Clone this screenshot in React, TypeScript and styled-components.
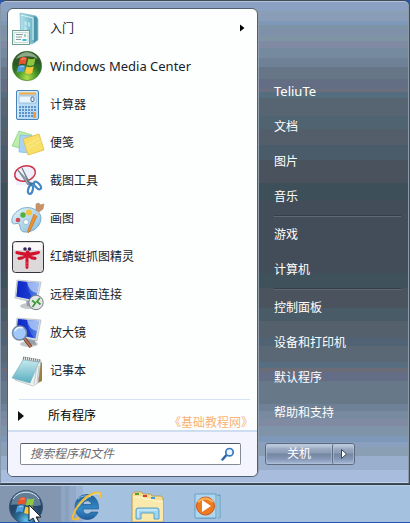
import React from "react";
import styled, { createGlobalStyle } from "styled-components";

const Global = createGlobalStyle`
  * { box-sizing: border-box; }
  body {
    margin: 0;
    font: 12px/18px "Noto Sans", "Noto Sans CJK SC", sans-serif;
  }
  button, input { font: inherit; }
`;

/* Glass tint bands: [end position, colour] from top to bottom */
const bands: [number, string][] = [
  [10, "#8ba1c4"], [13, "#8a9fb3"], [20, "#8a9db8"], [24, "#7d98b8"],
  [28, "#7d94a6"], [35, "#7f91a9"], [40, "#8095a4"], [47, "#808ba3"],
  [57, "#768a9f"], [66, "#6f8196"], [78, "#677687"], [88, "#636e84"],
  [91, "#6b6e7d"], [97, "#556e7f"], [115, "#576573"], [128, "#4f6370"],
  [144, "#535e6a"], [159, "#4a5b69"], [182, "#4a525d"], [199, "#3d5059"],
  [272, "#434d59"], [287, "#3f525b"], [307, "#4b535e"], [320, "#4a5b68"],
  [337, "#54606b"], [345, "#506374"], [361, "#5a6774"], [367, "#566e80"],
  [371, "#6a6d78"], [380, "#636e86"], [403, "#677889"], [410, "#6e8196"],
  [418, "#778a9f"], [425, "#808ba3"], [435, "#7f94a9"], [441, "#7d98b8"],
  [446, "#8a9fc0"], [455, "#8a9fb4"], [469, "#9aaecd"], [484, "#a8bcdd"],
];
const glass = bands
  .map(([end, c], i) => `${c} ${i ? bands[i - 1][0] : 0}px ${end}px`)
  .join(", ");

const Desktop = styled.main`
  display: flex;
  flex-direction: column;
  min-height: 100vh;
  background: #2456b0;
`;

const Menu = styled.section`
  display: grid;
  grid-template-columns: minmax(0, 251fr) minmax(0, 151fr);
  padding: 7px 0 6px 6px;
  border: 1px solid #414e5c;
  border-left-color: #8496aa;
  border-radius: 6px 6px 0 0;
  box-shadow: inset 0 1px #b4c2d8, inset -1px 0 #8a99aa, inset 0 -1px #c4d3ea;
  background: linear-gradient(${glass});
`;

const Programs = styled.div`
  position: relative;
  display: flex;
  flex-direction: column;
  border: 1px solid #4f5f70;
  border-radius: 6px;
  background: #fdfffe;
  box-shadow: 1px 0 #91a0ae;
  overflow: hidden;
`;

const List = styled.ul`
  margin: 0;
  padding: 0;
  list-style: none;
`;

const Program = styled.button`
  display: flex;
  align-items: center;
  gap: 6px;
  width: 100%;
  height: 38px;
  padding: 0 12px 0 4px;
  border: 0;
  background: none;
  color: #20222c;
  text-align: left;
`;

const ProgramIcon = styled.svg`
  flex: none;
  width: 32px;
  height: 32px;
  overflow: visible;
`;

const ProgramName = styled.span<{ $latin?: boolean }>`
  flex: 1;
  padding-top: ${(p) => (p.$latin ? 0 : 2)}px;
  font-size: ${(p) => (p.$latin ? 13 : 12)}px;
`;

const Arrow = styled.svg`
  flex: none;
  width: 6px;
  height: 10px;
`;

const Rule = styled.hr`
  align-self: stretch;
  height: 1px;
  margin: 10px 7px 0 11px;
  border: 0;
  background: #d6e3f5;
`;

const AllPrograms = styled.button`
  display: flex;
  align-items: center;
  gap: 24px;
  height: 30px;
  padding: 1px 10px 0;
  border: 0;
  background: none;
  color: #000;
`;

const Watermark = styled.span`
  position: absolute;
  right: 4px;
  bottom: 44px;
  color: #f8b376;
`;

const SearchArea = styled.div`
  padding: 11px 16px 11px 12px;
  border-top: 2px solid #cfddf0;
  background: #f3f4fd;
`;

const SearchBox = styled.label`
  display: flex;
  align-items: center;
  height: 22px;
  padding: 0 5px 0 9px;
  border: 1px solid #848b96;
  border-top-color: #4e5866;
  border-radius: 2px;
  background: #fff;
`;

const SearchInput = styled.input`
  flex: 1;
  min-width: 0;
  padding: 0;
  border: 0;
  outline: 0;
  background: none;
  font-style: italic;
  &::placeholder { color: #6c6c70; opacity: 1; }
`;

const Places = styled.nav`
  display: flex;
  flex-direction: column;
  padding: 66px 8px 12px 7px;
`;

const Place = styled.a<{ $latin?: boolean }>`
  height: 35px;
  padding-left: 9px;
  font-size: ${(p) => (p.$latin ? 13 : 12)}px;
  line-height: 35px;
  color: #fff;
  text-decoration: none;
`;

const PlaceRule = styled.hr`
  align-self: stretch;
  height: 3px;
  margin: 0 0 0 9px;
  border: solid transparent;
  border-width: 1px 0 0;
  background: linear-gradient(#343f49 50%, #5d6872 50%) padding-box;
`;

const Power = styled.div`
  display: flex;
  align-self: flex-start;
  height: 22px;
  margin-top: 13px;
  border: 1px solid #5d6b80;
  border-radius: 3px;
  background: linear-gradient(#bac7d9 0 2px, #9aa9c0 5px, #8b9cb6 9px, #74869f 10px, #8396b5 15px, #a9bbd8);
`;

const PowerButton = styled.button<{ $menu?: boolean }>`
  display: flex;
  align-items: center;
  justify-content: center;
  width: ${(p) => (p.$menu ? 22 : 66)}px;
  padding: 0;
  border: 0;
  border-left: ${(p) => (p.$menu ? "1px solid #5d6b80" : "0")};
  border-radius: 2px;
  background: none;
  box-shadow: inset 0 0 0 1px #b9c7dc88;
  color: #fff;
`;

const Taskbar = styled.footer`
  display: flex;
  flex: 1;
  gap: 27px;
  height: 38px;
  max-height: 38px;
  padding: 5px 9px 0;
  border-top: 1px solid #35414d;
  box-shadow: inset 0 1px #bdd2ea;
  background: linear-gradient(90deg, #8497b1 0 61px, #8da6c4 61px 65px, #8ba0bb 65px 69px, #93a9ca 69px 76px, #9bb4d4 76px 83px, #a4c2e0 83px);
  overflow: hidden;
`;

const TaskButton = styled.button`
  height: 34px;
  padding: 0;
  border: 0;
  background: none;
`;

const TaskIcon = styled.svg`
  display: block;
  width: 34px;
  height: 34px;
  overflow: visible;
`;

const Defs = styled.svg`
  display: block;
  width: 0;
  height: 0;
`;

const Flag = () => (
  <>
    <path d="M8 8.5c2.5-1.8 4.700-1.800 7-.7l-1.500 6.700c-2.400-1.200-4.500-1-7 .5z" fill="#e8552a" />
    <path d="M16.300 8.500c2.500 1.200 4.700 1 7.200-.3l-1.500 6.600c-2.500 1.400-4.800 1.300-7.200.2z" fill="#8fc83e" />
    <path d="M6.200 16.200c2.500-1.500 4.700-1.600 7-.5L11.700 22.300c-2.300-1.100-4.500-1-7 .6z" fill="#4f9ee0" />
    <path d="M14.500 16.400c2.500 1.200 4.700 1.100 7.200-.2l-1.500 6.700c-2.500 1.400-4.700 1.300-7.200.2z" fill="#ffc83a" />
    <path d="M9.500 9.500q2-1.200 4-.6M8 17q2-1 4-.5" stroke="#fff" strokeOpacity=".45" fill="none" />
  </>
);

const Monitor = () => (
  <>
    <ellipse cx="17" cy="28" rx="9" ry="3" fill="#c3c6ca" />
    <path d="M14 22l9 2 1 5-9-1z" fill="#989ea7" />
    <path d="M5 2l24 2-4 21L3 20z" fill="#d7dce2" stroke="#a6aeb8" strokeWidth=".6" />
    <path d="M6 3l21 2-3.500 17.500L4.500 18.500z" fill="url(#screen)" />
    <path d="M15 4l12 1-2 10q-8-1-10-11z" fill="#b9d0fa" opacity=".75" />
    <path d="M4.500 18.500L6 3l9 1q0 9 7 18z" fill="#0a24c4" opacity=".6" />
  </>
);

const icons: Record<string, React.ReactNode> = {
  start: (
    <>
      <path d="M8 1l16 3 2 3v21l-6 4-11-3z" fill="url(#teal)" stroke="#7db5c4" strokeWidth=".7" />
      <path d="M22 4l3 2v22l-3 3z" fill="#4b93a8" />
      <path d="M9 3l12 3v22" stroke="#d9f3f7" fill="none" />
      <path d="M12 9l3 1v4l-3-1zM16 10l2 1v4l-2-1zM12 14l3 1v3h-3z" fill="#b5e4ee" />
      <rect x=".5" y="18.500" width="17" height="14" fill="#f7fcfa" stroke="#6e9d93" />
      <path d="M2 20.500h14v10H2z" fill="none" stroke="#c5dcd5" />
      <path d="M4 22.500h7M4 25h6M4 27.500h5" stroke="#8b9ba6" />
      <path d="M12 22h2v3h-2z" fill="#a6cfb9" /><path d="M10.500 28h4" stroke="#47b8df" strokeWidth="2" />
    </>
  ),
  media: (
    <>
      <circle cx="15" cy="16" r="14.700" fill="url(#green)" stroke="#477a28" strokeWidth=".6" />
      <path d="M1 15C1-3 29-3 29 15c-8-5-18 4-28 0z" fill="#304f2a" opacity=".65" />
      <path d="M4 9C9 0 21 0 26 9c-8-4-15-3-22 0z" fill="#dce9d8" opacity=".55" />
      <Flag />
    </>
  ),
  calc: (
    <>
      <rect x="4.500" y="2.500" width="22" height="29" rx="1.500" fill="#b9dbf6" stroke="#4883b8" />
      <path d="M6 30V4h19" fill="none" stroke="#eaf6ff" />
      <path d="M7 5.500h17" stroke="#f1a940" strokeWidth="2" />
      <rect x="7" y="8" width="17" height="7" fill="#e9f5fe" stroke="#8aaecd" strokeWidth=".7" />
      <rect x="19" y="9" width="3" height="4.500" rx="1" fill="none" stroke="#47658a" />
      {[19, 22, 25, 28].map((y) => <path key={y} d={`M7 ${y}h17`} stroke="#5c94c8" strokeWidth="2" strokeDasharray="2 1" />)}
      <rect x="21" y="24" width="3" height="6" fill="#ef9a3b" />
    </>
  ),
  notes: (
    <>
      <path d="M7 5l13 4-5 15-15-4z" fill="#bdeda9" stroke="#83cd80" strokeWidth=".7" />
      <path d="M8 9l12 1-2 17-11-1z" fill="#a9d2f6" stroke="#80b6e4" strokeWidth=".7" />
      <path d="M11 13l16-5 5 16-16 5z" fill="#f8df68" stroke="#e6bd3c" strokeWidth=".8" />
      <path d="M14 20l13-8M15 23l14-8" stroke="#fff5b4" opacity=".6" />
    </>
  ),
  snip: (
    <>
      <path d="M3 13l18-2 3 11-20-1z" fill="#f0f1fc" />
      <ellipse cx="13" cy="9.500" rx="10.500" ry="7.500" transform="rotate(-15 13 9.500)" fill="#edf0fb" stroke="#d13246" strokeWidth="1.500" />
      <path d="M5 5l14 15-3 1zM10 4l9 17-2-1z" fill="#9aa8b1" stroke="#5b6c76" strokeWidth=".7" />
      <ellipse cx="18.500" cy="25.500" rx="2.300" ry="4.500" transform="rotate(15 18.500 25.500)" fill="#fff" stroke="#4688c5" strokeWidth="2.200" />
      <ellipse cx="25.500" cy="21.500" rx="2.300" ry="4.500" transform="rotate(-42 25.500 21.500)" fill="#fff" stroke="#4688c5" strokeWidth="2.200" />
      <path d="M17 18l5 1-3 3z" fill="#3b73a4" />
    </>
  ),
  paint: (
    <>
      <path d="M7 8C16 2 29 8 29 16c0 9-9 15-17 14-5-1-3-6-5-8s-6 2-7-2 2-9 7-12z" fill="url(#palette)" stroke="#659dbc" strokeWidth=".8" />
      <circle cx="14" cy="20" r="2.500" fill="#fff" stroke="#79a8c1" strokeWidth=".6" />
      <circle cx="6" cy="18" r="2.300" fill="#cf4853" /><circle cx="11" cy="13" r="2.700" fill="#55ae3d" />
      <circle cx="17" cy="10.500" r="3" fill="#f6c23c" />
      <path d="M22 12l3 2-7 15-2 2v-3z" fill="#f0912d" stroke="#ba6721" strokeWidth=".6" />
      <path d="M22 12l2-4 3 2-2 4z" fill="#c3ccd2" />
      <path d="M24 8V2l3-1 1 2 4-1-1 5-4 3z" fill="#c99367" stroke="#a87b57" strokeWidth=".5" />
    </>
  ),
  dragonfly: (
    <>
      <rect x=".500" y="1.500" width="31" height="31" rx="3" fill="#dcd9db" stroke="#34343c" />
      <path d="M2 3h28v7H2z" fill="#f9f7f8" />
      <path d="M13.500 12.500l-9-1.500q-2 1-.5 3l8.500 2-6.500 1q-1.500 1.500.5 3 4 0 7-2.500v10q1.500 3 3 0v-10q3 2.500 7 2.500 2-1.500.5-3l-5-1 8-2q2-2 0-3l-9 1.500-1.500-2h-2z" fill="#d3122e" />
      <path d="M13 26h4M13.500 23h3" stroke="#e7818d" strokeWidth=".6" />
      <circle cx="13" cy="9" r="1.800" fill="#372452" /><circle cx="17.500" cy="9" r="1.800" fill="#372452" />
    </>
  ),
  remote: (
    <>
      <Monitor />
      <circle cx="24" cy="24.500" r="7.200" fill="#e4e5e7" stroke="#777d84" />
      <path d="M20 22.500l3.500 2.500-3 4M28 20l-3 3.500 3.500 3" fill="none" stroke="#3c9935" strokeWidth="1.700" />
    </>
  ),
  magnify: (
    <>
      <Monitor />
      <path d="M12 22l7 9" stroke="#633c2d" strokeWidth="3.500" /><path d="M12 22l7 9" stroke="#b97652" strokeWidth="2" />
      <circle cx="7.500" cy="17" r="7" fill="#a2c7fa" stroke="#758ca9" strokeWidth="1.500" />
      <path d="M3 15q2-5 8-3" stroke="#ecf6ff" fill="none" strokeWidth="1.500" />
    </>
  ),
  notepad: (
    <>
      <path d="M27 6l3 3v18l-6 3z" fill="#a27d43" />
      <path d="M12 3l17 3-3 23-5 3-18-6z" fill="#eef2f3" stroke="#a8b0b1" strokeWidth=".6" />
      <path d="M11 6l16 2-9 21-18-5z" fill="url(#note)" stroke="#68a9b6" strokeWidth=".5" />
      <path d="M11 4l17 3" stroke="#777c7c" strokeWidth="3" strokeDasharray="1 1" />
      <path d="M25 12l-3 18M27 12l-2 16" stroke="#c0c9cb" />
    </>
  ),
};

const programs: [string, string][] = [
  ["start", "入门"], ["media", "Windows Media Center"], ["calc", "计算器"],
  ["notes", "便笺"], ["snip", "截图工具"], ["paint", "画图"],
  ["dragonfly", "红蜻蜓抓图精灵"], ["remote", "远程桌面连接"],
  ["magnify", "放大镜"], ["notepad", "记事本"],
];

const places = [
  ["TeliuTe", "文档", "图片", "音乐"],
  ["游戏", "计算机"],
  ["控制面板", "设备和打印机", "默认程序", "帮助和支持"],
];

const Gradients = () => (
  <Defs aria-hidden="true">
    <defs>
      <linearGradient id="teal"><stop stopColor="#b0e1eb" /><stop offset="1" stopColor="#57a6bb" /></linearGradient>
      <radialGradient id="green" cy=".9"><stop stopColor="#b5e04b" /><stop offset=".6" stopColor="#4d9f2b" /><stop offset="1" stopColor="#2c6b25" /></radialGradient>
      <linearGradient id="palette" x2="1" y2="1"><stop stopColor="#e5f4fb" /><stop offset="1" stopColor="#87bddb" /></linearGradient>
      <linearGradient id="screen"><stop stopColor="#1026ca" /><stop offset="1" stopColor="#5486e5" /></linearGradient>
      <linearGradient id="note" x2="0" y2="1"><stop stopColor="#c6e9ed" /><stop offset="1" stopColor="#58adbf" /></linearGradient>
      <radialGradient id="orb" cy=".9"><stop stopColor="#62c4ed" /><stop offset=".55" stopColor="#286992" /><stop offset="1" stopColor="#254767" /></radialGradient>
      <linearGradient id="ie" x2="0" y2="1"><stop stopColor="#215e9d" /><stop offset=".6" stopColor="#328bc8" /><stop offset="1" stopColor="#225b9a" /></linearGradient>
    </defs>
  </Defs>
);

export default function App() {
  return (
    <Desktop>
      <Global />
      <Gradients />
      <Menu aria-label="开始菜单">
        <Programs>
          <List>
            {programs.map(([icon, name], i) => (
              <li key={icon}>
                <Program>
                  <ProgramIcon viewBox="0 0 32 32" aria-hidden="true">{icons[icon]}</ProgramIcon>
                  <ProgramName $latin={icon === "media"}>{name}</ProgramName>
                  {i === 0 && <Arrow viewBox="0 0 6 10" aria-hidden="true"><path d="M1 1.500l4.500 3.500L1 8.500z" fill="#000" /></Arrow>}
                </Program>
              </li>
            ))}
          </List>
          <Rule />
          <AllPrograms>
            <Arrow viewBox="0 0 6 10" aria-hidden="true"><path d="M0 0l6 5-6 5z" fill="#111" /></Arrow>
            所有程序
          </AllPrograms>
          <Watermark>《基础教程网》</Watermark>
          <SearchArea>
            <SearchBox>
              <SearchInput aria-label="搜索程序和文件" placeholder="搜索程序和文件" />
              <svg width="14" height="14" viewBox="0 0 14 14" fill="none" aria-hidden="true">
                <path d="M5.500 8L1.500 12.500" stroke="#2864ad" strokeWidth="2.500" strokeLinecap="round" />
                <circle cx="8.500" cy="5.200" r="3.700" fill="#e7f3fd" stroke="#3977bd" strokeWidth="1.700" />
              </svg>
            </SearchBox>
          </SearchArea>
        </Programs>
        <Places>
          {places.map((group, i) => (
            <React.Fragment key={i}>
              {i > 0 && <PlaceRule />}
              {group.map((name) => (
                <Place key={name} href="#" $latin={name === "TeliuTe"}>{name}</Place>
              ))}
            </React.Fragment>
          ))}
          <Power>
            <PowerButton>关机</PowerButton>
            <PowerButton $menu aria-label="关机选项">
              <svg width="8" height="12" viewBox="0 0 8 12" aria-hidden="true"><path d="M1.500 1.500v9l5-4.500z" fill="#fff" stroke="#35465b" strokeLinejoin="round" /></svg>
            </PowerButton>
          </Power>
        </Places>
      </Menu>
      <Taskbar>
        <TaskButton aria-label="开始">
          <TaskIcon viewBox="0 0 34 34">
            <circle cx="17" cy="17" r="16.500" fill="url(#orb)" stroke="#3c536f" />
            <path d="M2 15C4-4 30-4 32 15c-8 3-18-2-30 0z" fill="#a9c1d3" opacity=".45" />
            <path d="M4 9C10 0 24 0 30 9" stroke="#dcebf5" fill="none" />
            <g transform="translate(2 0)"><Flag /></g>
            <path d="M20 15v16l4-3 3 6 3-2-3-5h5z" fill="#fff" stroke="#17232e" />
          </TaskIcon>
        </TaskButton>
        <TaskButton aria-label="Internet Explorer">
          <TaskIcon viewBox="0 0 34 34">
            <path d="M28 22c-2 5-6 7.500-11 7.500C10 29.500 5 24 5 17S10 4.500 17 4.500 29 10 28.500 19H13c0 6 6 6 8 3zM13 14.500h8.500c-.5-5-8-5-8.500 0z" fill="url(#ie)" fillRule="evenodd" stroke="#1d4f83" strokeWidth=".6" />
            <path d="M8 9q5-5 13-2" stroke="#8bc5e7" fill="none" />
            <path d="M31 8c2-12-17-3-25 11C1 28 1 32 9 28" fill="none" stroke="#f3bd32" strokeWidth="2" />
            <path d="M30 5c-2-5-15 3-22 12" fill="none" stroke="#ffe99a" strokeWidth=".7" />
          </TaskIcon>
        </TaskButton>
        <TaskButton aria-label="Windows 资源管理器">
          <TaskIcon viewBox="0 0 34 34">
            <path d="M1 32V4l2-2h8l1 2h8l1 2h9l2 2v24z" fill="#f4dd91" stroke="#b5934a" strokeWidth=".8" />
            <path d="M2 7h10l2 2h8l2 2h8v20H2z" fill="#fae9ac" />
            <path d="M2 7h9l2 2h8l2 2h9" stroke="#fffbe0" fill="none" />
            <path d="M4 4h4" stroke="#569d36" strokeWidth="2" /><path d="M12 6h4" stroke="#d34034" strokeWidth="2" /><path d="M20 8h4" stroke="#3f9bd2" strokeWidth="2" />
            <path d="M5 29V20q0-2 2-2h19q2 0 2 2v9h-5v-6H10v6z" fill="#9ed5ef" stroke="#539abe" strokeWidth=".9" />
            <path d="M7 27V20h19" stroke="#e3f6fd" fill="none" />
          </TaskIcon>
        </TaskButton>
        <TaskButton aria-label="Windows Media Player">
          <TaskIcon viewBox="0 0 34 34">
            <path d="M6 6l22-1v23H6z" fill="#77afd0" stroke="#4e8db4" strokeWidth=".7" />
            <path d="M3 4h21v24H3z" fill="#aed6ed" stroke="#5696bd" strokeWidth=".8" />
            <path d="M25 5v24M27 6v22" stroke="#ccebf7" strokeWidth=".7" />
            <circle cx="13.500" cy="16" r="9" fill="#ed7a20" stroke="#c9581c" />
            <path d="M6 12q7-7 15 0" stroke="#ffb25a" fill="none" strokeWidth="2" />
            <path d="M10 10v12l9-6z" fill="#fff" />
          </TaskIcon>
        </TaskButton>
      </Taskbar>
    </Desktop>
  );
}
